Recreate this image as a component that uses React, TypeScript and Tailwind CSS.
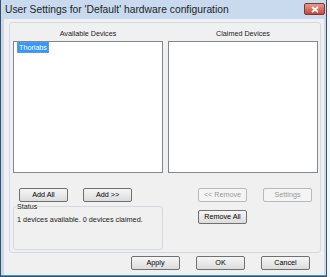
import React from "react";

const font = { fontFamily: '"Liberation Sans", Arial, sans-serif' };

function WinButton({ label, disabled, className = "" }: { label: string; disabled?: boolean; className?: string }) {
  return (
    <div
      className={`flex h-[14px] w-[49px] items-center justify-center rounded-[2px] border text-[7.2px] leading-none ${
        disabled
          ? "border-[#b6babd] bg-[#f4f4f4] text-[#9a9a9a]"
          : "border-[#707070] bg-gradient-to-b from-[#f6f6f6] to-[#dcdcdc] text-black"
      } ${className}`}
    >
      {label}
    </div>
  );
}

export default function App() {
  return (
    <div className="h-[277px] w-[330px] bg-[#f3f6fa]" style={font}>
      <div className="flex h-[277px] w-[327px] flex-col border border-t-0 border-[#3c4f63] bg-[#c9daee]">
        {/* title bar */}
        <div className="flex h-[19px] items-center justify-between pl-[4px] pr-[1px]">
          <span className="text-[10.3px] text-[#1e1e1e]">User Settings for 'Default' hardware configuration</span>
          <div className="mt-[-1px] flex h-[12px] w-[21px] items-center justify-center rounded-[2px] border border-[#7a3a33] bg-gradient-to-b from-[#e59a8b] to-[#c4473a]">
            <svg width="8" height="7" viewBox="0 0 8 7">
              <path d="M1 1 L7 6 M7 1 L1 6" stroke="white" strokeWidth="1.8" />
            </svg>
          </div>
        </div>

        {/* client area */}
        <div className="ml-[3px] mr-[2px] flex flex-1 flex-col border-t border-[#eef3f9] bg-[#f0f0f0] pb-[2px] pl-[5px] pr-[3px] pt-[2px]">
          <div className="rounded-[3px] border border-[#d3d9de] px-[3px] pb-[2px]">
            <div className="grid grid-cols-[150px_150px] gap-x-[5px]">
              {/* left column */}
              <div className="flex flex-col">
                <div className="flex h-[18px] items-center justify-center pt-[4px] text-[7.2px] text-[#222]">
                  Available Devices
                </div>
                <div className="flex h-[132px] items-start border border-[#828790] bg-white pl-[3px]">
                  <div className="w-fit border border-dotted border-[#8a9bb0] bg-[#3399ff] px-[1px] py-[1px] text-[7.2px] leading-[7px] text-white">
                    Thorlabs
                  </div>
                </div>
                <div className="mt-[15px] flex gap-[15px] pl-[6px]">
                  <WinButton label="Add All" />
                  <WinButton label="Add >>" />
                </div>
                <fieldset className="mt-[1px] h-[47px] rounded-[3px] border border-[#d3d9de] px-[3px]">
                  <legend className="px-0 text-[7.2px] leading-none text-[#222]">Status</legend>
                  <div className="mt-[5px] text-[7.3px] text-[#222]">1 devices available. 0 devices claimed.</div>
                </fieldset>
              </div>
              {/* right column */}
              <div className="flex flex-col">
                <div className="flex h-[18px] items-center justify-center pt-[4px] text-[7.2px] text-[#222]">
                  Claimed Devices
                </div>
                <div className="h-[132px] border border-[#828790] bg-white" />
                <div className="mt-[15px] flex gap-[16px] pl-[30px]">
                  <WinButton label="<< Remove" disabled />
                  <WinButton label="Settings" disabled />
                </div>
                <div className="mt-[8px] pl-[30px]">
                  <WinButton label="Remove All" />
                </div>
              </div>
            </div>
          </div>
          {/* dialog buttons */}
          <div className="mt-[3px] flex justify-end gap-[16px] pr-[11px]">
            <WinButton label="Apply" />
            <WinButton label="OK" />
            <WinButton label="Cancel" />
          </div>
        </div>
        <div className="h-[1px] bg-[#3b9cc2]" />
      </div>
    </div>
  );
}
